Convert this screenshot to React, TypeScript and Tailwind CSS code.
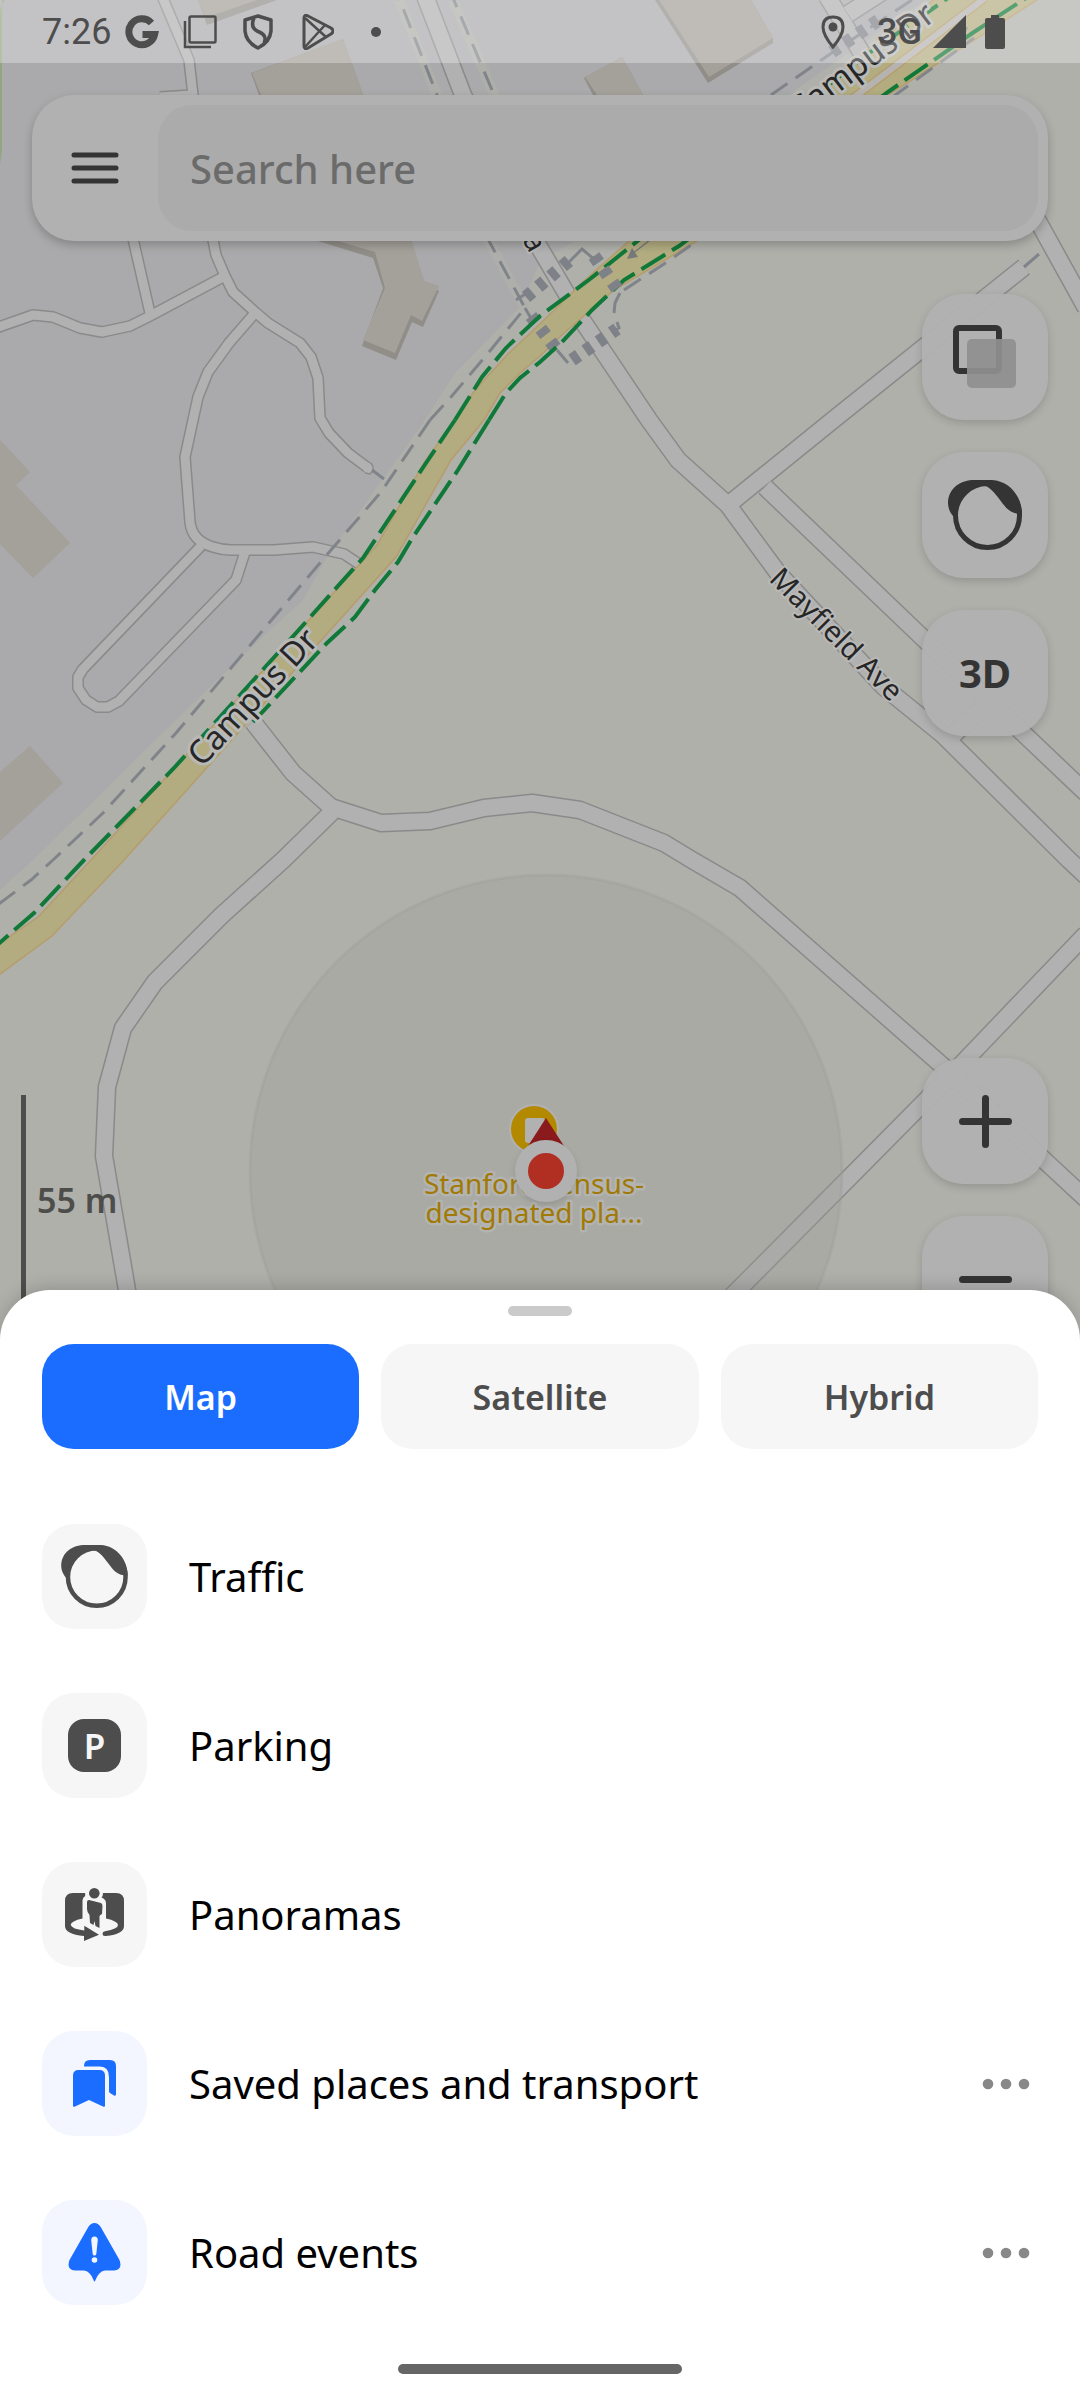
import type { ReactNode } from "react";

const casing = "#8a8a8a";
const roadFill = "#b1b1b1";

const narrowRoads = [
  "M162 -4L189 60L193 95L196 130",
  "M192 95L160 97",
  "M-4 328L33 315L53 317L80 328L102 332L130 326L148 317L225 276",
  "M131 230L150 313",
  "M211 230L216 255L225 276L233 292L255 312L268 323L300 343L311 357L318 378L320 418L329 433L348 453L368 468",
  "M255 313L229 343L208 372L198 397L193 420L185 457L190 522Q192 541 213 547Q222 550 231 550H274L313 547L344 554L362 566",
  "M201 546L83 669L78 677V688L86 700L97 707H108L119 701L236 580L245 552",
];

const wideRoads = [
  "M425 -4L463 95L535 240L582 320L649 420L678 460L728 505L778 573L884 687L943 735L1069 860L1086 876",
  "M765 487L925 640L1086 793",
  "M728 505L765 475L833 420L1024 267",
  "M948 740L984 706",
  "M1014 180L1039 223L1086 308",
  "M253 722L293 773L331 807L381 823L430 821L484 808L532 803L580 810L664 843L692 860L740 888L945 1068L1086 1199",
  "M332 812L283 860L222 915L155 982L123 1028L107 1087L104 1156L127 1290L136 1350",
  "M1086 934L953 1073L738 1290L680 1348",
  "M827 -4L866 60",
  "M848 14L882 -8",
];

const avenue =
  "M-4 946L38 917L91 860L377 545L424 463L455 420L475 390L508 354L540 324L585 280L629 241L809 95L936 -2H1040L888 95L697 241L614 290L564 333L540 356L520 373L500 393L484 420L451 460L396 557L124 860L52 936L-4 977Z";

function Roads({ paths, width }: { paths: string[]; width: number }) {
  return (
    <g fill="none" strokeLinejoin="round">
      {paths.map((d) => (
        <path key={d} d={d} stroke={casing} strokeWidth={width} strokeLinecap="butt" />
      ))}
      {paths.map((d) => (
        <path key={d} d={d} stroke={roadFill} strokeWidth={width - 3} strokeLinecap="butt" />
      ))}
    </g>
  );
}

function MapCanvas() {
  return (
    <svg
      className="absolute inset-0 h-full w-full"
      viewBox="0 0 1080 1342"
      preserveAspectRatio="xMidYMin slice"
      role="img"
      aria-label="Map of Campus Dr and Mayfield Ave"
    >
      <rect width="1080" height="1342" fill="#afb0aa" />
      <path
        d="M0 0H925L788 95L574 241L540 262L520 307L455 373L425 420L327 557L303 600L241 657L145 750L103 792L33 860L0 890Z"
        fill="#aaaaac"
      />
      <path d="M0 12Q1 4 5 0H0ZM0 0H2V150L0 165Z" fill="#92a67f" />

      <g fill="#918e89">
        <path d="M198 0L207 25L277 0Z" />
        <path d="M251 73L343 39L363 95H259Z" />
        <path d="M318 241L373 258L383 288L362 346L396 360L412 322L423 327L439 291L424 281L410 241Z" />
        <path d="M655 0L708 83L773 43V38L751 0Z" />
        <path d="M584 78L622 57L643 95H593Z" />
      </g>
      <g fill="#a4a09a">
        <path d="M198 0L205 18L257 0Z" />
        <path d="M252 73L343 39L363 95H261Z" />
        <path d="M318 235L375 252L385 288L363 340L395 353L411 315L422 321L439 286L424 281L410 235Z" />
        <path d="M659 0L709 77L773 38L751 0Z" />
        <path d="M585 77L622 57L643 95H597Z" />
        <path d="M0 440L30 472L16 485L70 543L33 578L0 544Z" />
        <path d="M0 772L30 746L63 783L0 841Z" />
      </g>

      {/* verges beside the foot paths */}
      <g fill="none" stroke="#aeafaa" strokeWidth="10">
        <path d="M399 0L437 95L489 241L525 308" />
        <path d="M453 0L492 90L530 180" />
      </g>

      <Roads paths={narrowRoads} width={12} />
      <circle cx="368" cy="468" r="5" fill={roadFill} />
      <path d="M371 463Q376 470 370 474L365 473" fill="none" stroke={casing} strokeWidth="1.5" />
      <Roads paths={wideRoads} width={19} />

      <path d={avenue} fill="#b2ac80" stroke="#b69c6a" strokeWidth="1.5" />
      <path d="M840 108L985 -2" fill="none" stroke="#b69c6a" strokeWidth="9" />
      <path d="M840 108L985 -2" fill="none" stroke="#b5b3b0" strokeWidth="6" />

      <g fill="none" stroke="#80848a" strokeWidth="3">
        <g strokeDasharray="20 10">
          <path d="M430 420L381 492L325 557L269 623L176 733L103 813L53 860L31 880L-4 906" />
          <path d="M430 420L451 397L489 352L525 308L489 241L437 95L399 -2" />
          <path d="M492 90L453 -2" />
          <path d="M624 290L667 262L697 241L898 93L974 38" />
          <path d="M771 95L833 52L915 -2" />
        </g>
        <path d="M372 470L384 479" />
        <path d="M1024 267L1039 254" />
        <path d="M569 262L582 249L595 260M525 308L532 320M516 300L530 291" />
        <path d="M557 350L568 363M614 313L615 303L620 293M617 322L619 328L613 332" />
      </g>
      <g fill="none" stroke="#7e8288" strokeWidth="13" strokeDasharray="8 8">
        <path d="M526 297L570 260" />
        <path d="M531 316L557 350" />
        <path d="M572 360L617 329" />
        <path d="M832 52L880 19" />
      </g>

      <g fill="none" stroke="#107838" strokeWidth="4" strokeDasharray="28 8">
        <path d="M455 420L424 466L363 558L296 633L174 768L84 860L34 913L-4 946" />
        <path d="M455 420L482 377L506 348L540 316L590 279L640 239L822 90L869 53L951 -4" />
        <path d="M489 420L458 470L413 537L398 562L375 590L355 617L327 643L253 722" />
        <path d="M489 420L506 393L520 378L540 362L561 343L592 310L624 280L679 246L888 92L974 32L1029 -4" />
      </g>
      <path
        d="M594 256L620 293"
        fill="none"
        stroke="#7e8288"
        strokeWidth="13"
        strokeDasharray="8 8"
      />
      <path d="M650 240L632 254" stroke="#77787a" strokeWidth="1.5" />
      <path d="M627 259L632 248L638 257Z" fill="#77787a" />
      <path d="M945 43L960 33" stroke="#77787a" strokeWidth="1.5" />
      <path d="M968 27L963 39L957 30Z" fill="#77787a" />

      <circle
        cx="546"
        cy="1171"
        r="296"
        fill="#9a9b98"
        fillOpacity="0.3"
        stroke="#9a9b98"
        strokeOpacity="0.3"
        strokeWidth="3"
      />

      <g
        fontFamily='"Noto Sans", sans-serif'
        fill="#262626"
        stroke="#b9b9b8"
        strokeWidth="6"
        strokeLinejoin="round"
        paintOrder="stroke"
      >
        <text x="202" y="768" fontSize="33" transform="rotate(-47 202 768)">
          Campus Dr
        </text>
        <text x="799" y="123" fontSize="33" transform="rotate(-37 799 123)">
          Campus Dr
        </text>
        <text x="768" y="580" fontSize="29" strokeWidth="4" transform="rotate(45 768 580)">
          Mayfield Ave
        </text>
        <text x="522" y="240" fontSize="29" strokeWidth="4" transform="rotate(60 522 240)">
          a
        </text>
      </g>

      <circle cx="534" cy="1129" r="24" fill="#b38900" stroke="#b1b1b1" strokeWidth="2" />
      <rect x="525" y="1118" width="20" height="25" rx="3" fill="#b1b1b1" />
      <g
        fontFamily='"Noto Sans", sans-serif'
        fontSize="28"
        textAnchor="middle"
        fill="#a07a04"
        stroke="#b3b3b2"
        strokeWidth="5"
        strokeLinejoin="round"
        paintOrder="stroke"
      >
        <text x="534" y="1194">Stanford census-</text>
        <text x="534" y="1223">designated pla...</text>
      </g>
      <path d="M546 1118L528 1146H564Z" fill="#8a1a1c" />
      <circle cx="546" cy="1171" r="31" fill="#b1b1b1" className="drop-shadow-md" />
      <circle cx="546" cy="1171" r="18" fill="#b12e23" />
    </svg>
  );
}

function StatusBar() {
  return (
    <header className="flex h-[63px] items-center justify-between bg-white/30 pr-[75px] pl-[42px] font-[Roboto] text-[36px] text-[#4d4d4d]">
      <div className="flex items-center gap-[22px]">
        <div className="flex items-center gap-[13px]">
          <span>7:26</span>
          <svg className="size-9" viewBox="0 0 36 36" fill="none" stroke="currentColor" strokeWidth="7">
            <path d="M27.5 9A13 13 0 1 0 30.6 20.5H18.5" />
          </svg>
        </div>
        <svg className="size-9" viewBox="0 0 36 36" fill="none" stroke="currentColor" strokeWidth="2.5">
          <rect x="7.5" y="2.5" width="26" height="26" rx="1.5" />
          <path d="M3 7V33H29" />
        </svg>
        <svg className="size-9" viewBox="0 0 36 36" fill="none" stroke="currentColor" strokeWidth="3.5">
          <path d="M18 2L31 6V17Q30 28 18 34Q6 28 5 17V6Z" strokeLinejoin="round" />
          <path d="M14 4Q10 13 17 17Q28 21 24 29" />
        </svg>
        <svg
          className="size-9"
          viewBox="0 0 36 36"
          fill="none"
          stroke="currentColor"
          strokeWidth="3"
          strokeLinejoin="round"
        >
          <path d="M6 4Q6 0 10 2L33 14Q37 17 33 20L10 34Q6 36 6 32Z" />
          <path d="M7 4L28 23M7 33L27 11" strokeWidth="2.5" />
        </svg>
        <svg className="size-9" viewBox="0 0 36 36" fill="currentColor">
          <circle cx="20" cy="18" r="5" />
        </svg>
      </div>
      <div className="flex items-center">
        <svg className="mr-8 h-[34px] w-6" viewBox="0 0 24 34">
          <path
            d="M12 2Q22 2 22 12Q22 20 12 32Q2 20 2 12Q2 2 12 2Z"
            fill="none"
            stroke="currentColor"
            strokeWidth="3"
          />
          <circle cx="12" cy="12" r="4.5" fill="currentColor" />
        </svg>
        <span className="mr-[11px] font-medium">3G</span>
        <svg className="mr-[19px] size-[33px]" viewBox="0 0 33 33" fill="currentColor">
          <path d="M33 0V33H0Z" />
        </svg>
        <svg className="h-[34px] w-5" viewBox="0 0 20 34" fill="currentColor">
          <path d="M6 0H14V3H18Q20 3 20 5V32Q20 34 18 34H2Q0 34 0 32V5Q0 3 2 3H6Z" />
        </svg>
      </div>
    </header>
  );
}

function TrafficIcon({ className }: { className: string }) {
  return (
    <svg className={className} viewBox="0 0 74 70" fill="currentColor">
      <circle cx="39.5" cy="35.5" r="32" fill="none" stroke="currentColor" strokeWidth="5" />
      <path d="M27 0H44C62 1 74 17 74 34C62 34 58 28 52 20C46 12 41 6 35 5.5C22 6 10 16 7 28C6 32 6 34 5 36C1 31 0 27 0 22C1 8 12 0 27 0Z" />
    </svg>
  );
}

function MapButton({ label, children }: { label: string; children: ReactNode }) {
  return (
    <button
      type="button"
      aria-label={label}
      className="flex size-[126px] items-center justify-center rounded-[42px] bg-[#b1b1b1]/95 text-[40px] font-bold text-[#343434] shadow-[0_3px_8px_rgba(0,0,0,0.16)]"
    >
      {children}
    </button>
  );
}

function PanoramaIcon() {
  return (
    <svg className="h-[53px] w-[59px]" viewBox="0 0 59 53" fill="currentColor">
      <path d="M8 5H20Q21 8 18.5 9.5Q17.5 11 17.5 13V30.5Q6 33 5.7 37Q7 41 19.3 42.5V37.7L34 46.7L19 53V48Q0 46 0 38V13Q0 5 8 5Z" />
      <path d="M38 5H51Q59 5 59 13V38Q59 46 41 48Q37.5 48.5 37.5 46Q37.5 43.5 40 43.3Q53 41 53 37Q52.5 33 41 30.5V15Q41 12 38.5 10.5L36.5 9.5Q38 8 38 5Z" />
      <circle cx="29.3" cy="5.3" r="5.3" />
      <path d="M24 12L36 15Q37.5 16 37.5 18L37 26Q35 27 34.5 28L34.5 40L30.5 38L29.5 33L28.5 37L25 35L24.5 27Q22 24 22 21V14Q22 12 24 12Z" />
    </svg>
  );
}

function SavedIcon() {
  return (
    <svg className="h-[47px] w-[43px]" viewBox="0 0 43 47" fill="currentColor">
      <path d="M5.5 10H26.5Q32 10 32 15.5V45.5Q32 47.5 30 46.5L16 40L2 46.5Q0 47.5 0 45.5V15.5Q0 10 5.5 10Z" />
      <path d="M11 6Q11 0 17 0H37Q43 0 43 6V34Q43 36.5 41 35.5L37 33Q36 32.5 36 31V17Q36 6.5 27 6.5H11Z" />
    </svg>
  );
}

function RoadEventsIcon() {
  return (
    <svg className="h-[59px] w-[53px]" viewBox="0 0 53 59">
      <path
        fill="currentColor"
        d="M20 4.5Q22.5 0 26.5 0T33 4.5L51.5 37Q55 46.5 46 47.5H37Q31 48 27.5 57Q26.5 60 25.5 57Q22 48 16 47.5H7Q-2 46.5 1.5 37Z"
      />
      <path fill="#f3f6fe" d="M23.2 17Q23.3 13.5 26.5 13.5T29.8 17L28.3 31Q28 32.5 26.5 32.5T24.7 31Z" />
      <circle cx="26.5" cy="37" r="2.8" fill="#f3f6fe" />
    </svg>
  );
}

type Layer = { name: string; icon: ReactNode; active?: boolean };

const layers: Layer[] = [
  { name: "Traffic", icon: <TrafficIcon className="h-[63px] w-[67px]" /> },
  {
    name: "Parking",
    icon: (
      <span
        aria-hidden="true"
        className="flex size-[53px] items-center justify-center rounded-2xl bg-[#4d4d4d] text-[35px] leading-none font-semibold text-[#f6f6f6]"
      >
        P
      </span>
    ),
  },
  { name: "Panoramas", icon: <PanoramaIcon /> },
  { name: "Saved places and transport", icon: <SavedIcon />, active: true },
  { name: "Road events", icon: <RoadEventsIcon />, active: true },
];

function LayerRow({ name, icon, active }: Layer) {
  return (
    <li className="flex items-center">
      <button type="button" className="flex flex-1 items-center gap-[42px] text-left text-[40px] text-black">
        <span
          className={
            active
              ? "flex size-[105px] items-center justify-center rounded-[32px] bg-[#f3f6fe] text-[#1a6dff]"
              : "flex size-[105px] items-center justify-center rounded-[32px] bg-[#f6f6f6] text-[#4d4d4d]"
          }
        >
          {icon}
        </span>
        {name}
      </button>
      {active && (
        <button type="button" aria-label={`${name} options`} className="flex h-[105px] items-center px-2">
          <svg className="h-3 w-12" viewBox="0 0 48 12" fill="#888888">
            <circle cx="6" cy="6" r="5.3" />
            <circle cx="24" cy="6" r="5.3" />
            <circle cx="42" cy="6" r="5.3" />
          </svg>
        </button>
      )}
    </li>
  );
}

const mapTypes = ["Map", "Satellite", "Hybrid"];

export default function App() {
  return (
    <div className="flex min-h-screen flex-col overflow-hidden bg-white font-['Noto_Sans',sans-serif]">
      <main className="relative flex flex-1 flex-col">
        <MapCanvas />
        <div className="relative flex flex-1 flex-col">
          <StatusBar />
          <form
            role="search"
            className="mx-8 mt-8 flex rounded-[42px] bg-[#b1b1b1] py-[10px] pr-[10px] shadow-[0_4px_10px_rgba(0,0,0,0.22)]"
          >
            <button type="button" aria-label="Menu" className="flex w-[126px] items-center justify-center">
              <svg
                className="h-8 w-12"
                viewBox="0 0 48 32"
                stroke="#343434"
                strokeWidth="5"
                strokeLinecap="round"
              >
                <path d="M3 3H45M3 16H45M3 29H45" />
              </svg>
            </button>
            <input
              type="search"
              aria-label="Search here"
              placeholder="Search here"
              className="h-[126px] min-w-0 flex-1 rounded-[34px] bg-[#ababab] px-8 text-[40px] font-medium text-[#343434] outline-none placeholder:text-[#6b6b6b]"
            />
          </form>

          <div className="mt-[53px] mr-8 flex flex-col items-end gap-8">
            <MapButton label="Map layers">
              <svg className="size-16" viewBox="0 0 64 64">
                <rect x="3" y="3" width="43" height="43" rx="3" fill="none" stroke="#343434" strokeWidth="6" />
                <rect x="14" y="14" width="49" height="49" rx="5" fill="#8f8f8f" fillOpacity="0.92" />
              </svg>
            </MapButton>
            <MapButton label="Traffic">
              <TrafficIcon className="h-[70px] w-[74px]" />
            </MapButton>
            <MapButton label="3D view">3D</MapButton>
          </div>

          <div className="mt-auto mr-8 flex items-end justify-between pt-8">
            <div className="mb-[37px] ml-[21px] flex h-[210px] items-center border-l-[5px] border-[#4d4d4b] pl-[11px] text-[34px] font-semibold text-[#4d4d4b]">
              55 m
            </div>
            <div className="flex flex-col gap-8">
              <MapButton label="Zoom in">
                <svg className="size-[53px]" viewBox="0 0 53 53" stroke="currentColor" strokeWidth="7" strokeLinecap="round">
                  <path d="M3.5 26.5H49.5M26.5 3.5V49.5" />
                </svg>
              </MapButton>
              <MapButton label="Zoom out">
                <svg className="size-[53px]" viewBox="0 0 53 53" stroke="currentColor" strokeWidth="7" strokeLinecap="round">
                  <path d="M3.5 26.5H49.5" />
                </svg>
              </MapButton>
            </div>
          </div>
        </div>
      </main>

      <section
        aria-label="Map layers"
        className="relative -mt-[52px] flex flex-col rounded-t-[50px] bg-white px-[42px] pt-4 pb-[26px] shadow-[0_-4px_16px_rgba(0,0,0,0.15)]"
      >
        <div className="mx-auto h-[10px] w-16 rounded-full bg-[#cacaca]" />
        <div className="mt-7 grid grid-cols-3 gap-[22px]">
          {mapTypes.map((type, index) => (
            <button
              key={type}
              type="button"
              aria-pressed={index === 0}
              className={
                index === 0
                  ? "h-[105px] rounded-[32px] bg-[#1a6dff] pt-[2px] text-[34px] font-semibold text-white"
                  : "h-[105px] rounded-[32px] bg-[#f6f6f6] pt-[2px] text-[34px] font-semibold text-[#4d4d4d]"
              }
            >
              {type}
            </button>
          ))}
        </div>
        <ul className="mt-[75px] flex flex-col gap-16">
          {layers.map((layer) => (
            <LayerRow key={layer.name} {...layer} />
          ))}
        </ul>
        <div className="mx-auto mt-[59px] h-[10px] w-[284px] rounded-full bg-[#666666]" />
      </section>
    </div>
  );
}
